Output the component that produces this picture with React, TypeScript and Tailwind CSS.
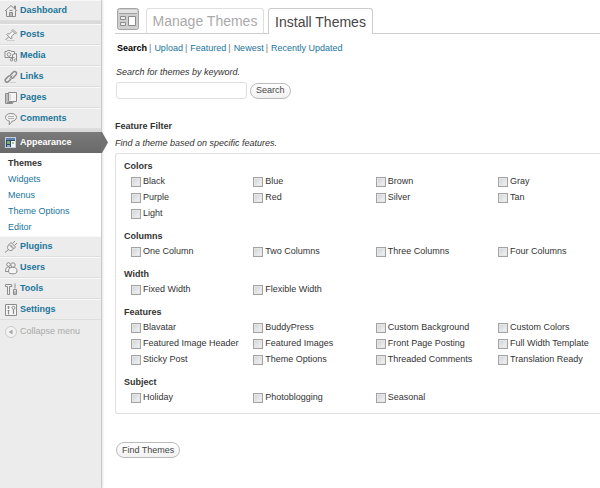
import type { ReactNode } from "react";

const Svg = ({ children }: { children: ReactNode }) => (
  <svg
    viewBox="0 0 14 14"
    className="h-3.5 w-3.5 shrink-0"
    fill="none"
    stroke="#8c8c8c"
    strokeWidth="1"
    aria-hidden="true"
  >
    {children}
  </svg>
);

const HomeIcon = () => (
  <Svg>
    <path d="M1 7 7 1.500 13 7M2.500 6.500v6h9v-6M10.500 4.500V2h1v3" />
    <path d="M5.500 12.500v-4h3v4M7 8.500v4M5.500 6.500h3" />
  </Svg>
);

const PinIcon = () => (
  <Svg>
    <path d="M8 3.500 5.500 6l-2-.3-.8.8 4.500 4.500.8-.8-.5-2L10.500 5.500M9 1.500l3.500 3.500-1 1L8 2.500z" fill="#fafafa" />
    <path d="M4.500 9 1.500 12" />
    <path d="M3 12.500h8" stroke="#cfcfcf" />
  </Svg>
);

const MediaIcon = () => (
  <Svg>
    <path d="M1 2.500h2l.5-1h3l.5 1h3.500v6H1z" fill="#f4f4f4" />
    <circle cx="5" cy="5.500" r="1.800" />
    <path d="M8.500 5.500 12.500 4.500v6.500" fill="#f4f4f4" />
    <circle cx="11.500" cy="11.300" r="1.200" />
    <path d="M8.500 5.500v5" />
    <circle cx="7.500" cy="10.800" r="1.200" />
  </Svg>
);

const LinkIcon = () => (
  <Svg>
    <path d="M6.500 5 9.300 2a1.900 1.900 0 0 1 2.700 2.700L9.500 7.500a1.900 1.900 0 0 1-2.600 0" strokeWidth="1.500" />
    <path d="M7 9 4.500 11.600a1.900 1.900 0 0 1-2.700-2.700L4.500 6.300a1.900 1.900 0 0 1 2.600 0" strokeWidth="1.500" />
    <path d="M5.500 8.500 8.500 5.500" />
    <path d="M6 12.500h6" stroke="#cfcfcf" />
  </Svg>
);

const PagesIcon = () => (
  <Svg>
    <path d="M4.500 1.500h8v9h-8z" fill="#f4f4f4" />
    <path d="M4 2.500H1.500v10h7l1-2M3 3v8.500h5.500" />
    <path d="M6 3v6" stroke="#c4c4c4" />
  </Svg>
);

const CommentIcon = () => (
  <Svg>
    <path d="M7 1.500c3.500 0 5.500 1.700 5.500 3.800S10.500 9 8 9.200c-.5 1.500-1.500 2.500-3 3.300.4-1 .6-2.200.4-3.400C3 8.700 1.500 7.200 1.500 5.300 1.500 3.200 3.500 1.500 7 1.500z" fill="#f2f2f2" />
    <path d="M4 4.500h6M4 6.500h6" stroke="#b0b0b0" />
  </Svg>
);

const AppearanceIcon = () => (
  <svg viewBox="0 0 14 14" className="h-3.5 w-3.5 shrink-0" aria-hidden="true">
    <rect x="1.500" y="1.500" width="10" height="10" fill="#2c4a6e" stroke="#c3d0dc" />
    <path d="M2 2h9v2H2z" fill="#5f86b0" />
    <path d="M3 5h3v3H3z" fill="#7db060" />
    <path d="M3 9h3v2H3z" fill="#8fa8c2" />
    <path d="M7 5h4v6H7z" fill="#f4f8fb" />
    <path d="M8 6h2v2H8z" fill="#a9c08e" />
  </svg>
);

const PlugIcon = () => (
  <Svg>
    <path d="M5 4.500 9.500 9c-1.500 1.800-3.700 2-5 .8S3.200 6.200 5 4.500z" fill="#f4f4f4" />
    <path d="m4.500 9.500-3.500 3M5 4.500l2-2 4.500 4.500-2 2M8.500 3.500 11 1M10.500 5.500 13 3M6.500 5 9 7.500" />
  </Svg>
);

const UsersIcon = () => (
  <Svg>
    <circle cx="4.500" cy="3.500" r="1.800" fill="#f4f4f4" />
    <path d="M1.500 10.500c0-3 .8-4.500 3-4.500l1.500.5v4z" fill="#f4f4f4" />
    <circle cx="9" cy="4" r="2.200" fill="#f4f4f4" />
    <path d="M4.500 10c0-2.500 1.500-3.700 4.200-3.700S13 7.500 13 10s-1.800 2.800-4.200 2.800S4.500 12.500 4.500 10z" fill="#f4f4f4" />
  </Svg>
);

const ToolsIcon = () => (
  <Svg>
    <path d="M1.500 4.500v-2h6l.5 2H5.500v8h-2v-8z" fill="#f0f0f0" />
    <path d="M11 1.500v5M9.500 7.500h3v5h-3zM11 9v3" />
  </Svg>
);

const SettingsIcon = () => (
  <Svg>
    <path d="M1.500 1.500h11v11h-11z" fill="#f6f6f6" />
    <path d="M4.500 3v3M3.500 4h2M4.500 8v3.500M3.500 7.500h2M9.500 6.500V11" strokeWidth="1.200" />
    <circle cx="9.500" cy="4.800" r="1.500" />
  </Svg>
);

const CollapseIcon = () => (
  <svg viewBox="0 0 14 14" className="h-3.5 w-3.5 shrink-0" aria-hidden="true">
    <circle cx="7" cy="7" r="5.500" fill="#f3f3f3" stroke="#cbcbcb" />
    <path d="M8.500 4.500v5L4.800 7z" fill="#a6a6a6" />
  </svg>
);

const ThemesHeaderIcon = () => (
  <svg viewBox="0 0 22 22" className="h-[22px] w-[22px] shrink-0" aria-hidden="true">
    <rect x=".5" y=".5" width="21" height="21" rx="2" fill="#cfcfcf" stroke="#a5a5a5" />
    <path d="M2 2h18v3H2z" fill="#e4e4e4" />
    <path d="M2 5.500h18" stroke="#a0a0a0" />
    <path d="M3.500 8.500h5v3h-5zM3.500 14.500h5v3h-5z" fill="#eee" stroke="#8a8a8a" />
    <path d="M11.500 8.500h7v9h-7z" fill="#fff" stroke="#8a8a8a" />
  </svg>
);

type Item = { name: string; icon: () => ReactNode };

const contentMenu: Item[] = [
  { name: "Posts", icon: PinIcon },
  { name: "Media", icon: MediaIcon },
  { name: "Links", icon: LinkIcon },
  { name: "Pages", icon: PagesIcon },
  { name: "Comments", icon: CommentIcon },
];

const siteMenu: Item[] = [
  { name: "Plugins", icon: PlugIcon },
  { name: "Users", icon: UsersIcon },
  { name: "Tools", icon: ToolsIcon },
  { name: "Settings", icon: SettingsIcon },
];

const MenuLink = ({ name, icon: Icon }: Item) => (
  <a
    href="#"
    className="flex h-[21px] items-center gap-0.5 border-t border-t-[#f8f8f8] border-b border-b-[#dedede] pl-1 font-bold text-[#21759b]"
  >
    <Icon />
    {name}
  </a>
);

const Sidebar = () => (
  <nav className="w-[102px] shrink-0 border-r border-[#c9c9c9] bg-[#ececec] shadow-[1px_0_2px_#e4e4e4]">
    <MenuLink name="Dashboard" icon={HomeIcon} />
    <div className="h-[3px] bg-[#dadada]" />
    {contentMenu.map((item) => (
      <MenuLink key={item.name} {...item} />
    ))}
    <div className="h-[3px] bg-[#dadada]" />
    <a
      href="#"
      className="relative flex h-[21px] items-center gap-0.5 bg-linear-to-b from-[#7a7a7a] to-[#696969] pl-1 font-bold text-white"
    >
      <AppearanceIcon />
      Appearance
      <svg viewBox="0 0 7 21" className="absolute top-0 left-full h-[21px] w-[7px]" aria-hidden="true">
        <path d="M0 0h1l6 10.500L1 21H0z" fill="#727272" />
      </svg>
    </a>
    <ul className="bg-white pt-0.5 pb-px pl-2 leading-4 text-[#21759b]">
      <li><a href="#" className="font-bold text-[#333]">Themes</a></li>
      <li><a href="#">Widgets</a></li>
      <li><a href="#">Menus</a></li>
      <li><a href="#">Theme Options</a></li>
      <li><a href="#">Editor</a></li>
    </ul>
    {siteMenu.map((item) => (
      <MenuLink key={item.name} {...item} />
    ))}
    <button type="button" className="flex h-6 items-center gap-0.5 pl-1 text-[#aaa]">
      <CollapseIcon />
      Collapse menu
    </button>
  </nav>
);

const groups: { title: string; options: string[] }[] = [
  { title: "Colors", options: ["Black", "Blue", "Brown", "Gray", "Purple", "Red", "Silver", "Tan", "Light"] },
  { title: "Columns", options: ["One Column", "Two Columns", "Three Columns", "Four Columns"] },
  { title: "Width", options: ["Fixed Width", "Flexible Width"] },
  {
    title: "Features",
    options: [
      "Blavatar", "BuddyPress", "Custom Background", "Custom Colors",
      "Featured Image Header", "Featured Images", "Front Page Posting", "Full Width Template",
      "Sticky Post", "Theme Options", "Threaded Comments", "Translation Ready",
    ],
  },
  { title: "Subject", options: ["Holiday", "Photoblogging", "Seasonal"] },
];

const buttonClass =
  "h-4 rounded-full border border-[#bbb] bg-linear-to-b from-white to-[#f1f1f1] px-[5px] leading-none text-[#464646]";

const filters = ["Upload", "Featured", "Newest", "Recently Updated"];

export default function App() {
  return (
    <div className="flex min-h-screen bg-white font-['Liberation_Sans',Arial,sans-serif] text-[9px] text-[#333]">
      <Sidebar />
      <main className="min-w-0 flex-1 pl-[13px]">
        <header className="flex h-[34px] items-end">
          <div className="flex h-[26px] w-[31px] border-b border-[#ccc] pl-0.5">
            <ThemesHeaderIcon />
          </div>
          <h1 className="flex items-end text-sm">
            <a
              href="#"
              className="flex h-[26px] w-[118px] items-center justify-center rounded-t-[3px] border border-[#dfdfdf] border-b-[#ccc] text-[#aaa]"
            >
              Manage Themes
            </a>
            <span className="h-px w-1 bg-[#ccc]" />
            <a
              href="#"
              className="flex h-[26px] w-[105px] items-center justify-center rounded-t-[3px] border border-b-0 border-[#ccc] text-[#464646]"
            >
              Install Themes
            </a>
          </h1>
          <span className="h-px flex-1 bg-[#ccc]" />
        </header>

        <ul className="mt-2 flex gap-0.5 pl-0.5 leading-3">
          <li><a href="#" className="font-bold text-black">Search</a></li>
          {filters.map((name) => (
            <li key={name} className="flex gap-[3px]">
              <span className="text-[#777]">|</span>
              <a href="#" className="text-[#21759b]">{name}</a>
            </li>
          ))}
        </ul>

        <form>
          <label htmlFor="keyword" className="mt-3 block pl-px leading-3 italic">
            Search for themes by keyword.
          </label>
          <div className="mt-1 flex items-center gap-[3px] pl-px">
            <input id="keyword" type="text" className="h-[17px] w-[131px] rounded-[3px] border border-[#dfdfdf] px-1" />
            <button type="submit" className={buttonClass}>Search</button>
          </div>

          <h2 className="mt-5 font-bold leading-[14px]">Feature Filter</h2>
          <p className="mt-1 leading-3 italic">Find a theme based on specific features.</p>

          <div className="mt-1 flex flex-col gap-[7px] rounded-l-[3px] border border-r-0 border-[#dfdfdf] pt-[5px] pb-[7px]">
            {groups.map(({ title, options }) => (
              <fieldset key={title}>
                <legend className="pl-2 font-bold leading-[15px]">{title}</legend>
                <div className="grid grid-cols-[1fr_1fr_1fr_102px] pl-[15px]">
                  {options.map((option) => (
                    <label key={option} className="flex h-4 items-center gap-0.5 whitespace-nowrap">
                      <input
                        type="checkbox"
                        className="h-2.5 w-2.5 shrink-0 appearance-none border border-[#a3a3a3] bg-linear-to-br from-[#cdd1d6] to-[#f6f6f6] shadow-[inset_0_0_0_1px_#e6e6e6] checked:from-[#21759b]"
                      />
                      {option}
                    </label>
                  ))}
                </div>
              </fieldset>
            ))}
          </div>

          <button type="submit" className={`mt-7 ml-px ${buttonClass}`}>Find Themes</button>
        </form>
      </main>
    </div>
  );
}
